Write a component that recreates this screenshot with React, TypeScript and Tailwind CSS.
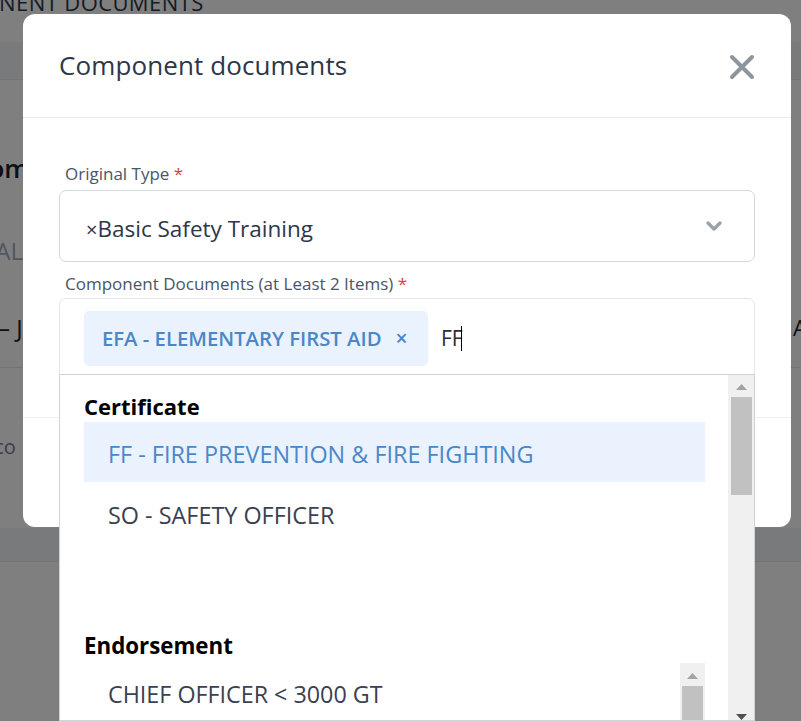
import React from "react";

function ScrollArrow({ dir }: { dir: "up" | "down" }) {
  return (
    <svg width="11" height="6" viewBox="0 0 11 6" className="block">
      {dir === "up" ? (
        <polygon points="0,6 5.5,0 11,6" fill="#a3a3a3" />
      ) : (
        <polygon points="0,0 5.5,6 11,0" fill="#505050" />
      )}
    </svg>
  );
}

export default function App() {
  return (
    <div className="relative w-[801px] h-[721px] overflow-hidden bg-white font-['Open_Sans','Noto_Sans',sans-serif]">
      {/* background page */}
      <div className="flex flex-col">
        <div className="h-[42px] overflow-hidden">
          <div className="-mt-[14px] -ml-[84px] text-[22px] text-[#2d3748] whitespace-nowrap tracking-[0.4px]">
            COMPONENT DOCUMENTS
          </div>
        </div>
        <div className="h-[38px] bg-gray-100 border-b border-gray-200" />
        <div className="h-[130px] flex items-center pt-[46px]">
          <div className="-ml-[28px] text-[26px] font-semibold text-[#1a202c] whitespace-nowrap">Com</div>
        </div>
        <div className="h-[70px] flex items-center pt-[12px]">
          <div className="-ml-[18px] text-[24px] text-[#a0aec0] whitespace-nowrap">TAL</div>
        </div>
        <div className="h-[88px] flex items-center justify-between border-b border-gray-200 pt-[8px]">
          <div className="-ml-[2px] text-[24px] text-[#1a202c] whitespace-nowrap">– J</div>
          <div className="-mr-[6px] text-[22px] text-[#1a202c]">A</div>
        </div>
        <div className="h-[160px] flex items-start pt-[64px]">
          <div className="-ml-[28px] text-[20px] text-[#718096] whitespace-nowrap">Taco</div>
        </div>
        <div className="h-[34px] bg-gray-100 border-b border-gray-200" />
      </div>

      {/* overlay */}
      <div className="absolute inset-0 bg-black/50" />

      {/* modal */}
      <div className="absolute left-[23px] top-[14px] w-[768px] h-[513px] rounded-[12px] bg-white flex flex-col">
        <div className="h-[104px] shrink-0 flex items-center justify-between pl-[36px] pr-[36px] border-b border-[#e8eaed]">
          <h2 className="text-[26px] font-medium text-[#2d3748] tracking-[0.1px]">Component documents</h2>
          <svg width="26" height="26" viewBox="0 0 26 26" className="mt-[2px]">
            <path d="M3 3 L23 23 M23 3 L3 23" stroke="#8d959f" strokeWidth="4" strokeLinecap="round" />
          </svg>
        </div>
        <div className="flex-1 px-[36px] pt-[45px] flex flex-col">
          <label className="pl-[6px] text-[17px] leading-[22px] text-[#4a5568]">
            Original Type <span className="text-[#d53f4c]">*</span>
          </label>
          <div className="mt-[5px] h-[72px] shrink-0 rounded-[7px] border border-[#d3d8de] flex items-center justify-between pl-[26px] pr-[32px]">
            <span className="pt-[6px] text-[22.5px] text-[#2d3748]">
              <span className="text-[20px]">×</span>Basic Safety Training
            </span>
            <svg width="16" height="10" viewBox="0 0 16 10">
              <path d="M2 2 L8 8 L14 2" stroke="#9aa1a9" strokeWidth="3.2" fill="none" strokeLinecap="round" strokeLinejoin="round" />
            </svg>
          </div>
          <label className="pl-[6px] mt-[11px] text-[17px] leading-[22px] text-[#4a5568]">
            Component Documents (at Least 2 Items) <span className="text-[#d53f4c]">*</span>
          </label>
          <div className="relative mt-[3px] shrink-0">
            <div className="h-[82px] rounded-[7px] border border-[#e2e6ea] flex items-start pt-[12px] pl-[24px] gap-[13px]">
              <div className="h-[55px] w-[344px] rounded-[5px] bg-[#e9f2fd] flex items-center pl-[18px] gap-[14px]">
                <span className="text-[20.3px] font-semibold text-[#4a87c8]">EFA - ELEMENTARY FIRST AID</span>
                <span className="text-[21px] font-semibold text-[#4a87c8]">×</span>
              </div>
              <div className="h-[55px] flex items-center">
                <span className="text-[21px] text-[#2d2d2d]">FF</span>
                <span className="w-[1px] h-[25px] bg-black -ml-[2px]" />
              </div>
            </div>

            {/* dropdown */}
            <div className="absolute left-0 top-[76px] w-[696px] h-[347px] bg-white border border-[#cdd3d9] flex overflow-hidden">
              <div className="flex-1 flex flex-col pl-[24px] pr-[23px] overflow-hidden">
                <div className="shrink-0 pt-[15px] text-[22px] font-bold text-black leading-[32px]">Certificate</div>
                <div className="shrink-0 h-[60px] bg-[#e9f2fd] flex items-center pl-[24px] pt-[6px] text-[23.4px] text-[#4a87c8]">
                  FF - FIRE PREVENTION &amp; FIRE FIGHTING
                </div>
                <div className="shrink-0 h-[64px] flex items-center pl-[24px] pt-[4px] text-[23.4px] text-[#3a4150]">SO - SAFETY OFFICER</div>
                <div className="shrink-0 h-[84px]" />
                <div className="shrink-0 text-[22.3px] font-bold text-black leading-[32px]">Endorsement</div>
                <div className="shrink-0 mt-[1px] flex h-[80px]">
                  <div className="flex-1 pl-[24px] pt-[14px] text-[23.3px] text-[#3a4150] leading-[34px]">CHIEF OFFICER &lt; 3000 GT</div>
                  <div className="w-[25px] bg-[#f0f0f0] flex flex-col items-center pt-[10px]">
                    <ScrollArrow dir="up" />
                    <div className="mt-[7px] w-[21px] flex-1 bg-[#c1c1c1]" />
                  </div>
                </div>
              </div>
              <div className="w-[26px] bg-[#f0f0f0] flex flex-col items-center justify-between pt-[9px]">
                <div className="flex flex-col items-center w-full">
                  <ScrollArrow dir="up" />
                  <div className="mt-[7px] w-[21px] h-[98px] bg-[#c1c1c1]" />
                </div>
                <div>
                  <ScrollArrow dir="down" />
                </div>
              </div>
            </div>
          </div>
          <div className="mt-[37px] -mx-[36px] border-t border-[#eceef0]" />
        </div>
      </div>
    </div>
  );
}
